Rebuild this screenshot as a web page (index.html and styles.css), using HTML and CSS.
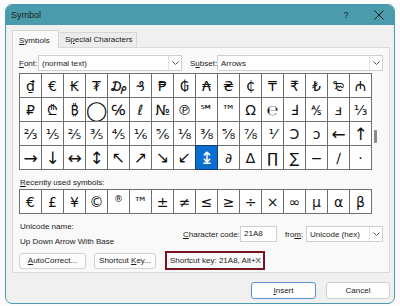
FILE: index.html
```html
<!DOCTYPE html>
<html lang="en">
<head>
    <meta charset="UTF-8">
    <meta name="viewport" content="width=device-width, initial-scale=1.0">
    <title>Symbol</title>
    <link rel="stylesheet" href="styles.css">
</head>
<body>
    <div class="window">
        <div class="titlebar">
            <span class="title">Symbol</span>
            <span class="help">?</span>
            <span class="close">
                <svg width="10" height="10" viewBox="0 0 10 10"><path d="M0.5 0.5 L9.5 9.5 M9.5 0.5 L0.5 9.5" stroke="#1b1b1b" stroke-width="1" fill="none"/></svg>
            </span>
        </div>

        <div class="body">
            <div class="tabs">
                <div class="tab active"><u>S</u>ymbols</div>
                <div class="tab">S<u>p</u>ecial Characters</div>
            </div>

            <div class="panel">
                <div class="font-row">
                    <label class="font-label"><u>F</u>ont:</label>
                    <div class="combo font-combo">
                        <span class="combo-text">(normal text)</span>
                        <span class="combo-arrow"><svg width="7" height="4" viewBox="0 0 7 4"><path d="M0.5 0.5 L3.5 3.5 L6.5 0.5" stroke="#555" fill="none"/></svg></span>
                    </div>
                    <label class="subset-label">S<u>u</u>bset:</label>
                    <div class="combo subset-combo">
                        <span class="combo-text">Arrows</span>
                        <span class="combo-arrow"><svg width="7" height="4" viewBox="0 0 7 4"><path d="M0.5 0.5 L3.5 3.5 L6.5 0.5" stroke="#555" fill="none"/></svg></span>
                    </div>
                </div>

                <div class="grid-wrap">
                    <div class="grid">
                        <div class="cell">₫</div><div class="cell">€</div><div class="cell">₭</div><div class="cell">₮</div>
                        <div class="cell">₯</div><div class="cell">₰</div><div class="cell">₱</div><div class="cell">₲</div>
                        <div class="cell">₳</div><div class="cell">₴</div><div class="cell">₵</div><div class="cell">₸</div>
                        <div class="cell">₹</div><div class="cell">₺</div><div class="cell">₻</div><div class="cell">₼</div>

                        <div class="cell">₽</div><div class="cell">₾</div><div class="cell">₿</div><div class="cell big">◯</div>
                        <div class="cell">℅</div><div class="cell">ℓ</div><div class="cell">№</div><div class="cell">℗</div>
                        <div class="cell">℠</div><div class="cell">™</div><div class="cell">Ω</div><div class="cell">℮</div>
                        <div class="cell">Ⅎ</div><div class="cell">⅍</div><div class="cell">ⅎ</div><div class="cell">⅓</div>

                        <div class="cell">⅔</div><div class="cell">⅕</div><div class="cell">⅖</div><div class="cell">⅗</div>
                        <div class="cell">⅘</div><div class="cell">⅙</div><div class="cell">⅚</div><div class="cell">⅛</div>
                        <div class="cell">⅜</div><div class="cell">⅝</div><div class="cell">⅞</div><div class="cell">⅟</div>
                        <div class="cell">Ↄ</div><div class="cell">ↄ</div><div class="cell arrow">←</div><div class="cell arrow">↑</div>

                        <div class="cell arrow">→</div><div class="cell arrow">↓</div><div class="cell arrow">↔</div><div class="cell arrow">↕</div>
                        <div class="cell diag">↖</div><div class="cell diag">↗</div><div class="cell diag">↘</div><div class="cell diag">↙</div>
                        <div class="cell arrow selected">↨</div><div class="cell">∂</div><div class="cell">∆</div><div class="cell">∏</div>
                        <div class="cell">∑</div><div class="cell">−</div><div class="cell">∕</div><div class="cell">·</div>
                    </div>
                    <div class="scrollbar"><div class="thumb"></div></div>
                </div>

                <div class="recent-label"><u>R</u>ecently used symbols:</div>
                <div class="grid recent">
                    <div class="cell">€</div><div class="cell">£</div><div class="cell">¥</div><div class="cell">©</div>
                    <div class="cell small">®</div><div class="cell">™</div><div class="cell">±</div><div class="cell">≠</div>
                    <div class="cell">≤</div><div class="cell">≥</div><div class="cell">÷</div><div class="cell">×</div>
                    <div class="cell">∞</div><div class="cell">μ</div><div class="cell">α</div><div class="cell">β</div>
                </div>

                <div class="info-row">
                    <div class="name-col">
                        <div class="line">Unicode name:</div>
                        <div class="line">Up Down Arrow With Base</div>
                    </div>
                    <div class="code-row">
                        <label class="code-label"><u>C</u>haracter code:</label>
                        <div class="text-input">21A8</div>
                        <label class="from-label">fro<u>m</u>:</label>
                        <div class="combo from-combo">
                            <span class="combo-text">Unicode (hex)</span>
                            <span class="combo-arrow"><svg width="7" height="4" viewBox="0 0 7 4"><path d="M0.5 0.5 L3.5 3.5 L6.5 0.5" stroke="#555" fill="none"/></svg></span>
                        </div>
                    </div>
                </div>

                <div class="button-row">
                    <button class="btn autocorrect"><u>A</u>utoCorrect...</button>
                    <button class="btn shortcut">Shortcut <u>K</u>ey...</button>
                    <div class="shortcut-box">Shortcut key: 21A8, Alt+X</div>
                </div>
            </div>

            <div class="footer">
                <button class="btn default"><u>I</u>nsert</button>
                <button class="btn cancel">Cancel</button>
            </div>
        </div>
    </div>
</body>
</html>
```

FILE: styles.css
```css
* {
    margin: 0;
    padding: 0;
    box-sizing: border-box;
}

body {
    font-family: "Liberation Sans", Arial, sans-serif;
    font-size: 8px;
    color: #1b1b1b;
    background: #fbfbfb;
}

u {
    text-decoration: underline;
    text-underline-offset: 1px;
}

.window {
    margin: 4px 5px 0;
    width: 390px;
    height: 300px;
    border: 1px solid #4a9cac;
    border-radius: 7px;
    background: #f0f0f0;
    overflow: hidden;
    display: flex;
    flex-direction: column;
}

.titlebar {
    height: 20px;
    background: #4a9cac;
    display: flex;
    align-items: center;
    padding-left: 5px;
}

.title {
    flex: 1;
    font-size: 9px;
}

.help {
    width: 26px;
    text-align: center;
    font-size: 9px;
    margin-right: 5px;
}

.close {
    width: 30px;
    display: flex;
    justify-content: center;
}

.body {
    padding: 0 4px 0 6px;
}

/* tabs */
.tabs {
    display: flex;
    align-items: flex-end;
    margin-top: 5px;
}

.tab {
    height: 15px;
    line-height: 14px;
    padding: 0 6px;
    border: 1px solid #d6d6d6;
    border-bottom: none;
    background: #ececec;
    white-space: nowrap;
}

.tab.active {
    width: 47px;
    height: 18px;
    line-height: 19px;
    background: #f9f9f9;
    margin-bottom: -1px;
    position: relative;
    z-index: 1;
}

.tab:nth-child(2) {
    width: 78px;
    border-left: none;
}

.panel {
    height: 226px;
    border: 1px solid #d9d9d9;
    background: #f9f9f9;
    padding: 7px 6px 0 6px;
}

/* font / subset */
.font-row {
    display: flex;
    align-items: center;
    height: 16px;
}

.font-label {
    width: 19px;
}

.subset-label {
    width: 35px;
    padding-left: 8px;
}

.combo {
    height: 16px;
    background: #fff;
    border: 1px solid #cfcfcf;
    display: flex;
    align-items: center;
}

.combo-text {
    flex: 1;
    padding-left: 3px;
}

.combo-arrow {
    width: 13px;
    height: 100%;
    border-left: 1px solid #e2e2e2;
    display: flex;
    align-items: center;
    justify-content: center;
}

.font-combo { width: 144px; }
.subset-combo { width: 166px; }

/* symbol grid */
.grid-wrap {
    display: flex;
    margin-top: 2px;
}

.grid {
    display: grid;
    grid-template-columns: repeat(16, 21px);
    grid-auto-rows: 23px;
    gap: 1px;
    background: #6f6f6f;
    border: 1px solid #6f6f6f;
    width: 353px;
}

.cell {
    background: #fff;
    display: flex;
    align-items: center;
    justify-content: center;
    font-family: "DejaVu Sans", "Noto Sans", sans-serif;
    font-size: 14px;
    color: #111;
    overflow: hidden;
}

.cell.arrow { font-size: 17px; }
.cell.diag { font-size: 16px; }
.cell.big { font-size: 19px; }
.cell.small { font-size: 9px; align-items: flex-start; padding-top: 4px; }

.cell.selected {
    background: #0a6fd0;
    color: #fff;
    outline: 1px solid #0a3f78;
}

.scrollbar {
    width: 11px;
    padding-top: 57px;
    padding-left: 2px;
}

.thumb {
    width: 3px;
    height: 13px;
    background: #8a8a8a;
    border-radius: 1px;
}

.recent-label {
    margin-top: 6px;
    height: 13px;
    line-height: 13px;
    padding-left: 1px;
}

.recent {
    grid-auto-rows: 23px;
}

/* unicode name + character code */
.info-row {
    display: flex;
    margin-top: 5px;
    height: 30px;
}

.name-col {
    width: 164px;
    padding-left: 1px;
}

.line {
    height: 15px;
    line-height: 15px;
}

.code-row {
    display: flex;
    align-items: center;
}

.code-label {
    width: 57px;
}

.text-input {
    width: 37px;
    height: 16px;
    background: #fff;
    border: 1px solid #cfcfcf;
    line-height: 14px;
    padding-left: 3px;
}

.from-label {
    width: 29px;
    padding-left: 8px;
}

.from-combo { width: 77px; }

/* buttons */
.button-row {
    display: flex;
    align-items: center;
    margin-top: 2px;
    height: 19px;
}

.btn {
    font-family: inherit;
    font-size: 8px;
    color: #1b1b1b;
    height: 16px;
    background: #fdfdfd;
    border: 1px solid #d0d0d0;
    border-radius: 3px;
}

.autocorrect {
    width: 67px;
    margin-right: 8px;
}

.shortcut {
    width: 62px;
    margin-right: 9px;
}

.shortcut-box {
    width: 100px;
    height: 19px;
    border: 2px solid #7a1222;
    line-height: 15px;
    padding-left: 3px;
    white-space: nowrap;
}

.footer {
    display: flex;
    justify-content: flex-end;
    margin-top: 9px;
}

.footer .btn {
    height: 17px;
}

.default {
    width: 65px;
    border-color: #5d92cf;
}

.cancel {
    width: 64px;
    margin-left: 10px;
}
```
